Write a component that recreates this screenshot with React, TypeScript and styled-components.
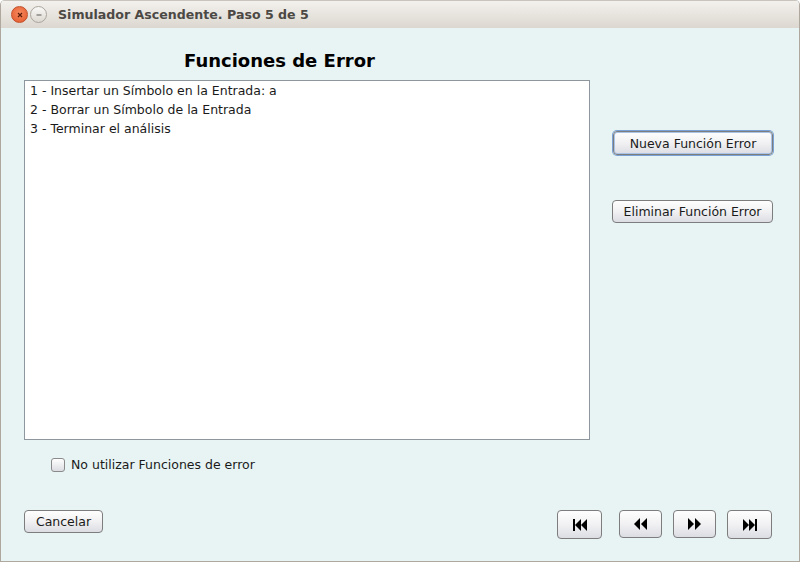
import { FunctionComponent } from 'react';
import styled, { createGlobalStyle } from 'styled-components';

const GlobalStyle = createGlobalStyle`
	html, body {
		margin: 0;
		padding: 0;
		background: #ffffff;
	}
	#root {
		width: 800px;
		height: 562px;
	}
`;

const Window = styled.div`
	width: 800px;
	height: 562px;
	box-sizing: border-box;
	display: flex;
	flex-direction: column;
	background: #e8f4f4;
	border: 1px solid #aea89f;
	border-top: none;
	border-radius: 5px 5px 0 0;
	overflow: hidden;
	font-family: 'DejaVu Sans', sans-serif;
	color: #222222;
`;

const TitleBar = styled.div`
	height: 28px;
	flex: none;
	display: flex;
	align-items: center;
	padding-left: 10px;
	gap: 2px;
	background: linear-gradient(#f3f1ed, #dcd7d0);
	border-top: 1px solid #c9c4bc;
	box-sizing: border-box;
`;

const WinButton = styled.div<{ $close?: boolean }>`
	width: 17px;
	height: 17px;
	border-radius: 50%;
	display: flex;
	align-items: center;
	justify-content: center;
	box-sizing: border-box;
	border: 1px solid ${(p) => (p.$close ? '#c0502a' : '#aaa59d')};
	background: ${(p) =>
		p.$close
			? 'radial-gradient(circle at 50% 40%, #f68a5f, #e3572a)'
			: 'linear-gradient(#faf9f7, #dcd8d1)'};
`;

const WindowTitle = styled.span`
	margin-left: 9px;
	font-family: 'DejaVu Sans', sans-serif;
	font-weight: bold;
	font-size: 12.6px;
	color: #4c4945;
`;

const Content = styled.div`
	flex: 1;
	display: flex;
	flex-direction: column;
	padding: 0 0 0 23px;
`;

const MainRow = styled.div`
	display: flex;
`;

const LeftColumn = styled.div`
	width: 566px;
	display: flex;
	flex-direction: column;
`;

const Heading = styled.h1`
	margin: 0;
	height: 52px;
	box-sizing: border-box;
	padding: 23px 0 0 160px;
	font-size: 18px;
	font-weight: bold;
	color: #000000;
	font-family: 'DejaVu Sans', sans-serif;
	line-height: 20px;
`;

const ListBox = styled.ul`
	margin: 0;
	height: 360px;
	box-sizing: border-box;
	list-style: none;
	padding: 0 0 0 5px;
	background: #ffffff;
	border: 1px solid #8f979e;
`;

const ListItem = styled.li`
	font-size: 12.5px;
	line-height: 19px;
	color: #1a1a1a;
`;

const SideColumn = styled.div`
	display: flex;
	flex-direction: column;
	align-items: flex-start;
	padding: 103px 0 0 22px;
	gap: 45px;
`;

const Button = styled.button<{ $focused?: boolean; $w: number; $h: number }>`
	width: ${(p) => p.$w}px;
	height: ${(p) => p.$h}px;
	box-sizing: border-box;
	display: flex;
	align-items: center;
	justify-content: center;
	padding: 0;
	font-family: 'DejaVu Sans', sans-serif;
	font-size: 12.5px;
	color: #1a1a1a;
	border-radius: 4px;
	border: 1px solid #7d7d7d;
	background: linear-gradient(#fefefe, #f1f1f3 50%, #dcdde3);
	box-shadow: ${(p) => (p.$focused ? '0 0 0 1px #7aa2d6, inset 0 0 0 1px #a9c3e6' : 'none')};
	cursor: pointer;
`;

const CheckRow = styled.label`
	display: flex;
	align-items: center;
	gap: 6px;
	margin: 17px 0 0 27px;
	font-size: 12.5px;
	color: #1a1a1a;
`;

const CheckBox = styled.span`
	width: 14px;
	height: 14px;
	box-sizing: border-box;
	border-radius: 3px;
	border: 1px solid #8a8a8a;
	background: linear-gradient(#ffffff, #dcdde2);
`;

const BottomRow = styled.div`
	margin-top: 38px;
	display: flex;
	align-items: flex-start;
	padding-right: 27px;
`;

const NavGroup = styled.div`
	margin-left: auto;
	display: flex;
	gap: 17px;
`;

const NavPair = styled.div`
	display: flex;
	gap: 11px;
`;

const NavIcon: FunctionComponent<{ kind: 'first' | 'prev' | 'next' | 'last' }> = ({ kind }) => {
	const shapes: Record<string, JSX.Element> = {
		first: (
			<>
				<rect x="1" y="1" width="2" height="12" />
				<polygon points="3,7 9,1 9,13" />
				<polygon points="9,7 15,1 15,13" />
			</>
		),
		prev: (
			<>
				<polygon points="1,7 7,1 7,13" />
				<polygon points="8,7 14,1 14,13" />
			</>
		),
		next: (
			<>
				<polygon points="1,1 7,7 1,13" />
				<polygon points="8,1 14,7 8,13" />
			</>
		),
		last: (
			<>
				<polygon points="1,1 7,7 1,13" />
				<polygon points="7,1 13,7 7,13" />
				<rect x="13" y="1" width="2" height="12" />
			</>
		),
	};
	return (
		<svg width="16" height="14" viewBox="0 0 16 14" fill="#000000">
			{shapes[kind]}
		</svg>
	);
};

const App: FunctionComponent = () => {
	return (
		<>
			<GlobalStyle />
			<Window>
				<TitleBar>
					<WinButton $close>
						<svg width="8" height="8" viewBox="0 0 8 8">
							<path d="M2 2 L6 6 M6 2 L2 6" stroke="#5a1a08" strokeWidth="1.2" />
						</svg>
					</WinButton>
					<WinButton>
						<svg width="8" height="8" viewBox="0 0 8 8">
							<path d="M1.5 4 L6.5 4" stroke="#5d5a55" strokeWidth="1.2" />
						</svg>
					</WinButton>
					<WindowTitle>Simulador Ascendente. Paso 5 de 5</WindowTitle>
				</TitleBar>
				<Content>
					<MainRow>
						<LeftColumn>
							<Heading>Funciones de Error</Heading>
							<ListBox>
								<ListItem>1 - Insertar un Símbolo en la Entrada: a</ListItem>
								<ListItem>2 - Borrar un Símbolo de la Entrada</ListItem>
								<ListItem>3 - Terminar el análisis</ListItem>
							</ListBox>
						</LeftColumn>
						<SideColumn>
							<Button $focused $w={160} $h={24} style={{ marginLeft: 1 }}>
								Nueva Función Error
							</Button>
							<Button $w={161} $h={23}>
								Eliminar Función Error
							</Button>
						</SideColumn>
					</MainRow>
					<CheckRow>
						<CheckBox />
						No utilizar Funciones de error
					</CheckRow>
					<BottomRow>
						<Button $w={79} $h={23}>
							Cancelar
						</Button>
						<NavGroup>
							<Button $w={45} $h={29}>
								<NavIcon kind="first" />
							</Button>
							<NavPair>
								<Button $w={43} $h={28}>
									<NavIcon kind="prev" />
								</Button>
								<Button $w={43} $h={28}>
									<NavIcon kind="next" />
								</Button>
								<Button $w={45} $h={29}>
									<NavIcon kind="last" />
								</Button>
							</NavPair>
						</NavGroup>
					</BottomRow>
				</Content>
			</Window>
		</>
	);
};

export default App;
